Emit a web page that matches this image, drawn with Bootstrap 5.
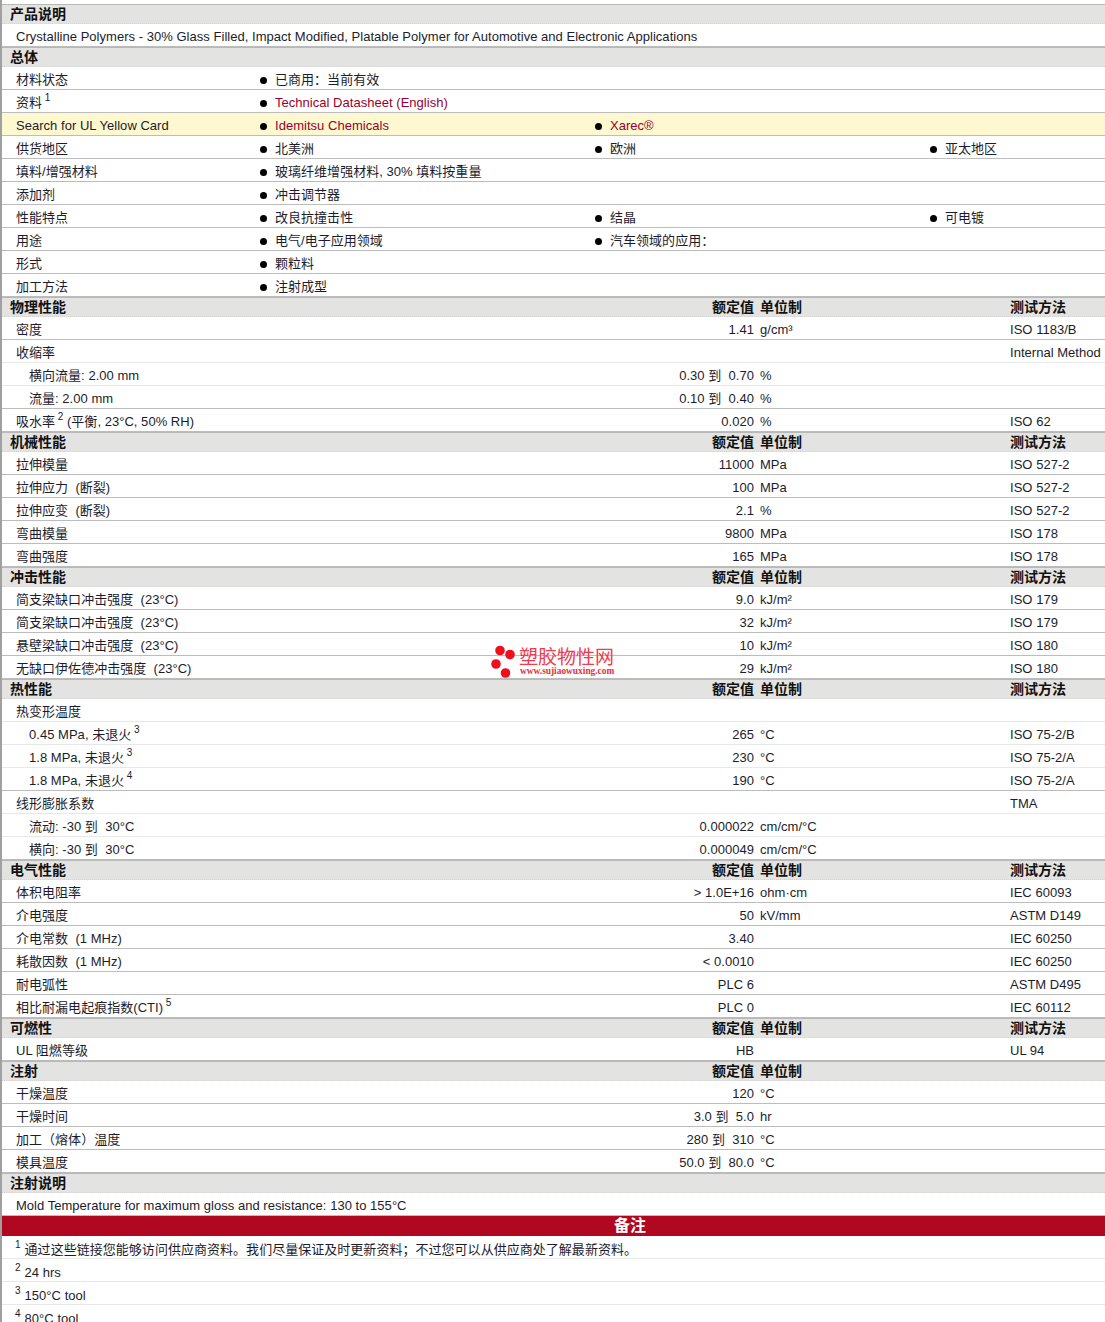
<!DOCTYPE html>
<html lang="zh">
<head>
<meta charset="utf-8">
<title>Datasheet</title>
<link rel="stylesheet" href="https://cdn.jsdelivr.net/npm/bootstrap@5.3.0/dist/css/bootstrap.min.css">
<style>
html,body{height:1322px;overflow:hidden;background:#fff}
body{font-family:"Liberation Sans","Noto Sans CJK SC",sans-serif;font-size:13px;letter-spacing:.03px;line-height:16px;color:#1c1c2c}
.dsheet{position:relative;padding-top:4px;border-left:2px solid #a0a0a0;height:1322px;overflow:hidden}
.dhead,.drow,.dred{display:flex;align-items:center;white-space:nowrap}
.dhead{height:20px;background:#e3e3e1;border-top:1px solid #b8b8b8;border-bottom:1px dotted #d4d4d4;font-size:14px;letter-spacing:0;font-weight:700;color:#111;padding-bottom:1px}
.drow{height:23px;border-bottom:1px solid #bcbcbc;padding-top:3px}
.drow.thin{border-bottom-color:#e8e8e8}
.drow.hl{background:#fdf8cf}
.drow.nrow{padding-top:5px}
.dhead .dlabel{padding-left:8px}
.dlabel{flex:0 0 258px;padding-left:14px}
.dlabel.wide{flex-basis:400px}
.dlabel.sub{padding-left:27px}
.dlabel sup,.note sup{font-size:10px;top:-.6em}
.dlabel sup{margin-left:-1px}
.dval{flex:0 0 352px;text-align:right}
.dunit{flex:0 0 250px;margin-left:6px}
.dmeth{flex:1 1 auto}
.bul{flex:0 0 335px;padding-left:15px;position:relative}
.bul::before{content:"";position:absolute;left:0;top:5px;width:7px;height:7px;border-radius:50%;background:#000}
.bul a{color:#98002e;text-decoration:none}
.dred{height:20px;justify-content:center;background:#b00820;color:#fff;font-size:16px;font-weight:700;padding-left:155px;line-height:20px}
.dred span{margin-left:-2px}
.note{padding-left:13px}
.note sup{margin-right:4px}
.wmark{position:absolute;left:486px;top:642px;width:135px;height:38px;pointer-events:none}
.wtxt{position:absolute;left:31px;top:6px;font-size:19px;line-height:20px;color:#ef3b4e;letter-spacing:0;white-space:nowrap}
.wurl{position:absolute;left:32px;top:24px;font-family:"Liberation Serif",serif;font-size:9.400px;line-height:10px;font-weight:700;letter-spacing:0;color:#e8303f;white-space:nowrap}
</style>
</head>
<body>
<div class="dsheet">
<div class="dhead"><div class="dlabel">产品说明</div></div>
<div class="drow"><div class="dlabel">Crystalline Polymers - 30% Glass Filled, Impact Modified, Platable Polymer for Automotive and Electronic Applications</div></div>

<div class="dhead"><div class="dlabel">总体</div></div>
<div class="drow"><div class="dlabel">材料状态</div><div class="bul">已商用：当前有效</div></div>
<div class="drow"><div class="dlabel">资料 <sup>1</sup></div><div class="bul"><a href="#">Technical Datasheet (English)</a></div></div>
<div class="drow hl"><div class="dlabel">Search for UL Yellow Card</div><div class="bul"><a href="#">Idemitsu Chemicals</a></div><div class="bul"><a href="#">Xarec®</a></div></div>
<div class="drow"><div class="dlabel">供货地区</div><div class="bul">北美洲</div><div class="bul">欧洲</div><div class="bul">亚太地区</div></div>
<div class="drow"><div class="dlabel">填料/增强材料</div><div class="bul">玻璃纤维增强材料, 30% 填料按重量</div></div>
<div class="drow"><div class="dlabel">添加剂</div><div class="bul">冲击调节器</div></div>
<div class="drow"><div class="dlabel">性能特点</div><div class="bul">改良抗撞击性</div><div class="bul">结晶</div><div class="bul">可电镀</div></div>
<div class="drow"><div class="dlabel">用途</div><div class="bul">电气/电子应用领域</div><div class="bul">汽车领域的应用：</div></div>
<div class="drow"><div class="dlabel">形式</div><div class="bul">颗粒料</div></div>
<div class="drow"><div class="dlabel">加工方法</div><div class="bul">注射成型</div></div>

<div class="dhead"><div class="dlabel wide">物理性能</div><div class="dval">额定值</div><div class="dunit">单位制</div><div class="dmeth">测试方法</div></div>
<div class="drow"><div class="dlabel wide">密度</div><div class="dval">1.41</div><div class="dunit">g/cm³</div><div class="dmeth">ISO 1183/B</div></div>
<div class="drow thin"><div class="dlabel wide">收缩率</div><div class="dval"></div><div class="dunit"></div><div class="dmeth">Internal Method</div></div>
<div class="drow thin"><div class="dlabel wide sub">横向流量: 2.00 mm</div><div class="dval">0.30 到 &nbsp;0.70</div><div class="dunit">%</div></div>
<div class="drow"><div class="dlabel wide sub">流量: 2.00 mm</div><div class="dval">0.10 到 &nbsp;0.40</div><div class="dunit">%</div></div>
<div class="drow"><div class="dlabel wide">吸水率 <sup>2</sup> (平衡, 23°C, 50% RH)</div><div class="dval">0.020</div><div class="dunit">%</div><div class="dmeth">ISO 62</div></div>

<div class="dhead"><div class="dlabel wide">机械性能</div><div class="dval">额定值</div><div class="dunit">单位制</div><div class="dmeth">测试方法</div></div>
<div class="drow"><div class="dlabel wide">拉伸模量</div><div class="dval">11000</div><div class="dunit">MPa</div><div class="dmeth">ISO 527-2</div></div>
<div class="drow"><div class="dlabel wide">拉伸应力 &nbsp;(断裂)</div><div class="dval">100</div><div class="dunit">MPa</div><div class="dmeth">ISO 527-2</div></div>
<div class="drow"><div class="dlabel wide">拉伸应变 &nbsp;(断裂)</div><div class="dval">2.1</div><div class="dunit">%</div><div class="dmeth">ISO 527-2</div></div>
<div class="drow"><div class="dlabel wide">弯曲模量</div><div class="dval">9800</div><div class="dunit">MPa</div><div class="dmeth">ISO 178</div></div>
<div class="drow"><div class="dlabel wide">弯曲强度</div><div class="dval">165</div><div class="dunit">MPa</div><div class="dmeth">ISO 178</div></div>

<div class="dhead"><div class="dlabel wide">冲击性能</div><div class="dval">额定值</div><div class="dunit">单位制</div><div class="dmeth">测试方法</div></div>
<div class="drow"><div class="dlabel wide">简支梁缺口冲击强度 &nbsp;(23°C)</div><div class="dval">9.0</div><div class="dunit">kJ/m²</div><div class="dmeth">ISO 179</div></div>
<div class="drow"><div class="dlabel wide">简支梁缺口冲击强度 &nbsp;(23°C)</div><div class="dval">32</div><div class="dunit">kJ/m²</div><div class="dmeth">ISO 179</div></div>
<div class="drow"><div class="dlabel wide">悬壁梁缺口冲击强度 &nbsp;(23°C)</div><div class="dval">10</div><div class="dunit">kJ/m²</div><div class="dmeth">ISO 180</div></div>
<div class="drow"><div class="dlabel wide">无缺口伊佐德冲击强度 &nbsp;(23°C)</div><div class="dval">29</div><div class="dunit">kJ/m²</div><div class="dmeth">ISO 180</div></div>

<div class="dhead"><div class="dlabel wide">热性能</div><div class="dval">额定值</div><div class="dunit">单位制</div><div class="dmeth">测试方法</div></div>
<div class="drow thin"><div class="dlabel wide">热变形温度</div></div>
<div class="drow thin"><div class="dlabel wide sub">0.45 MPa, 未退火 <sup>3</sup></div><div class="dval">265</div><div class="dunit">°C</div><div class="dmeth">ISO 75-2/B</div></div>
<div class="drow thin"><div class="dlabel wide sub">1.8 MPa, 未退火 <sup>3</sup></div><div class="dval">230</div><div class="dunit">°C</div><div class="dmeth">ISO 75-2/A</div></div>
<div class="drow"><div class="dlabel wide sub">1.8 MPa, 未退火 <sup>4</sup></div><div class="dval">190</div><div class="dunit">°C</div><div class="dmeth">ISO 75-2/A</div></div>
<div class="drow thin"><div class="dlabel wide">线形膨胀系数</div><div class="dval"></div><div class="dunit"></div><div class="dmeth">TMA</div></div>
<div class="drow thin"><div class="dlabel wide sub">流动: -30 到 &nbsp;30°C</div><div class="dval">0.000022</div><div class="dunit">cm/cm/°C</div></div>
<div class="drow"><div class="dlabel wide sub">横向: -30 到 &nbsp;30°C</div><div class="dval">0.000049</div><div class="dunit">cm/cm/°C</div></div>

<div class="dhead"><div class="dlabel wide">电气性能</div><div class="dval">额定值</div><div class="dunit">单位制</div><div class="dmeth">测试方法</div></div>
<div class="drow"><div class="dlabel wide">体积电阻率</div><div class="dval">&gt; 1.0E+16</div><div class="dunit">ohm·cm</div><div class="dmeth">IEC 60093</div></div>
<div class="drow"><div class="dlabel wide">介电强度</div><div class="dval">50</div><div class="dunit">kV/mm</div><div class="dmeth">ASTM D149</div></div>
<div class="drow"><div class="dlabel wide">介电常数 &nbsp;(1 MHz)</div><div class="dval">3.40</div><div class="dunit"></div><div class="dmeth">IEC 60250</div></div>
<div class="drow"><div class="dlabel wide">耗散因数 &nbsp;(1 MHz)</div><div class="dval">&lt; 0.0010</div><div class="dunit"></div><div class="dmeth">IEC 60250</div></div>
<div class="drow"><div class="dlabel wide">耐电弧性</div><div class="dval">PLC 6</div><div class="dunit"></div><div class="dmeth">ASTM D495</div></div>
<div class="drow"><div class="dlabel wide">相比耐漏电起痕指数(CTI) <sup>5</sup></div><div class="dval">PLC 0</div><div class="dunit"></div><div class="dmeth">IEC 60112</div></div>

<div class="dhead"><div class="dlabel wide">可燃性</div><div class="dval">额定值</div><div class="dunit">单位制</div><div class="dmeth">测试方法</div></div>
<div class="drow"><div class="dlabel wide">UL 阻燃等级</div><div class="dval">HB</div><div class="dunit"></div><div class="dmeth">UL 94</div></div>

<div class="dhead"><div class="dlabel wide">注射</div><div class="dval">额定值</div><div class="dunit">单位制</div></div>
<div class="drow"><div class="dlabel wide">干燥温度</div><div class="dval">120</div><div class="dunit">°C</div></div>
<div class="drow"><div class="dlabel wide">干燥时间</div><div class="dval">3.0 到 &nbsp;5.0</div><div class="dunit">hr</div></div>
<div class="drow"><div class="dlabel wide">加工（熔体）温度</div><div class="dval">280 到 &nbsp;310</div><div class="dunit">°C</div></div>
<div class="drow"><div class="dlabel wide">模具温度</div><div class="dval">50.0 到 &nbsp;80.0</div><div class="dunit">°C</div></div>

<div class="dhead"><div class="dlabel">注射说明</div></div>
<div class="drow"><div class="dlabel">Mold Temperature for maximum gloss and resistance: 130 to 155°C</div></div>

<div class="dred"><span>备注</span></div>
<div class="drow thin nrow"><div class="note"><sup>1</sup>通过这些链接您能够访问供应商资料。我们尽量保证及时更新资料；不过您可以从供应商处了解最新资料。</div></div>
<div class="drow thin nrow"><div class="note"><sup>2</sup>24 hrs</div></div>
<div class="drow thin nrow"><div class="note"><sup>3</sup>150°C tool</div></div>
<div class="drow thin nrow"><div class="note"><sup>4</sup>80°C tool</div></div>

<div class="wmark">
<svg width="30" height="38" viewBox="0 0 30 38" aria-hidden="true"><g fill="#f0101c"><circle cx="12" cy="8.500" r="4.800"/><circle cx="22" cy="12.500" r="4.800"/><circle cx="8" cy="22" r="4.800"/><circle cx="17.500" cy="31" r="4.800"/></g></svg>
<div class="wtxt">塑胶物性网</div>
<div class="wurl">www.sujiaowuxing.com</div>
</div>
</div>
<script src="https://cdn.jsdelivr.net/npm/bootstrap@5.3.0/dist/js/bootstrap.bundle.min.js"></script>
</body>
</html>
